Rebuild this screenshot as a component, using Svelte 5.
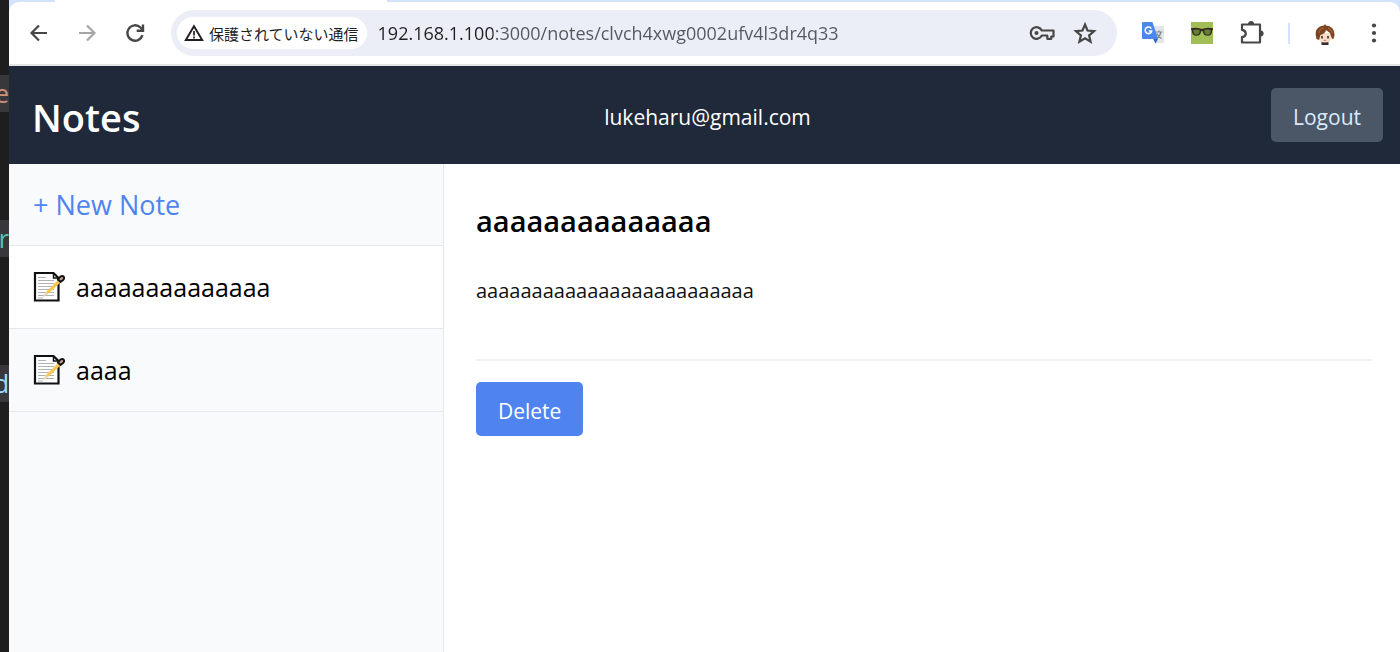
<script>
	const fragments = [
		{ text: 'e', kind: 'string' },
		{ text: 'r', kind: 'type' },
		{ text: 'd', kind: 'variable' }
	];

	const notes = [
		{ id: 'clvch4xwg0002ufv4l3dr4q33', title: 'aaaaaaaaaaaaaa', body: 'aaaaaaaaaaaaaaaaaaaaaaaaa' },
		{ id: 'clvch4xwg0001ufv4l3dr4q32', title: 'aaaa', body: 'aaaa' }
	];

	let activeId = $state(notes[0].id);
	let active = $derived(notes.find((n) => n.id === activeId));
	let url = $derived(`192.168.1.100:3000/notes/${activeId}`);

	function open(event, id) {
		event.preventDefault();
		activeId = id;
	}
</script>

<div class="desktop">
	<div class="editor">
		{#each fragments as f}
			<code class={f.kind}>{f.text}</code>
		{/each}
	</div>

	<div class="browser">
		<div class="tabs"><div class="tab"></div></div>

		<div class="toolbar">
			<button class="icon" aria-label="Back">
				<svg width="24" height="24" viewBox="0 0 24 24" fill="none" stroke="#474747" stroke-width="2.2">
					<path d="M20 12H5M12 4.5 4.5 12l7.5 7.5" />
				</svg>
			</button>
			<button class="icon" aria-label="Forward" disabled>
				<svg width="24" height="24" viewBox="0 0 24 24" fill="none" stroke="#a6a6a6" stroke-width="2.2">
					<path d="M4 12h15M12 4.5 19.5 12 12 19.5" />
				</svg>
			</button>
			<button class="icon" aria-label="Reload">
				<svg width="24" height="24" viewBox="0 0 24 24" fill="none" stroke="#474747" stroke-width="2.4">
					<path d="M19.5 14.2A7.7 7.7 0 1 1 17.5 6.5L19.8 9" />
					<path d="M20 3.5v6.2h-6.3" />
				</svg>
			</button>

			<div class="address">
				<button class="security">
					<svg width="20" height="18" viewBox="0 0 20 18" fill="none" stroke="#1f1f1f" stroke-width="1.9">
						<path d="M10 2.2 18.2 16H1.8z" />
						<path d="M10 7v4.5M10 12.6v2" stroke-width="1.7" />
					</svg>
					<span>保護されていない通信</span>
				</button>
				<input type="text" aria-label="Address" value={url} spellcheck="false" />
				<button class="icon" aria-label="Passwords">
					<svg width="26" height="24" viewBox="0 0 26 24" fill="none" stroke="#474747" stroke-width="2.2">
						<path d="M12.8 9.5h11.7v6h-2.2v2.3h-4v-3.3h-5.5a5.8 5.8 0 1 1 0-5z" stroke-linejoin="round" />
						<circle cx="7.5" cy="12" r="2" fill="#474747" stroke="none" />
					</svg>
				</button>
				<button class="icon" aria-label="Bookmark">
					<svg width="24" height="24" viewBox="0 0 24 24" fill="none" stroke="#474747" stroke-width="2.2">
						<path d="m12 3.5 2.5 6 6.6.6-5 4.3 1.5 6.3-5.600-3.400-5.600 3.400 1.5-6.300-5-4.300 6.600-.6z" />
					</svg>
				</button>
			</div>

			<div class="extensions">
				<button class="icon" aria-label="Translate">
					<svg width="24" height="24" viewBox="0 0 24 24">
						<path d="M9 5h13a1 1 0 0 1 1 1v15a1 1 0 0 1-1 1h-8z" fill="#e3e5e8" />
						<path d="m12 17.500 2.500 5 2.700-5z" fill="#2f5fc4" />
						<path d="M2 1h9.500l5.700 17H2a1 1 0 0 1-1-1V2a1 1 0 0 1 1-1z" fill="#4c87ee" />
						<path d="M10.300 7.600A3.300 3.300 0 1 0 10.700 10H7.800" fill="none" stroke="#fff" stroke-width="1.5" />
						<path d="M14.800 11h6.500M18 9.500V11M20 11q-1 4.500-4 6.500M16 12.500q1.500 3.500 4.500 5" fill="none" stroke="#7d8790" stroke-width="1.2" />
					</svg>
				</button>
				<button class="icon" aria-label="Sunglasses">
					<svg width="24" height="24" viewBox="0 0 24 24">
						<path d="M1 1h22v22H1z" fill="#a1bd55" />
						<path d="M1 7.2q5.500-1.200 9 .2 2 .8 4 0 3.500-1.400 9-.2v1.600l-.8.5q-.2 5.500-4.500 5.500-4.200 0-5-4.600-.7-.7-1.400 0-.8 4.600-5 4.600-4.300 0-4.500-5.500L1 8.800z" fill="#31291e" />
						<path d="M3.200 9q3-1 6.400 0 .5 4.700-3.300 4.700Q3 13.700 3.200 9zM14.400 9q3.400-1 6.400 0 .2 4.700-3.100 4.700-3.800 0-3.300-4.700z" fill="#667d36" />
					</svg>
				</button>
				<button class="icon" aria-label="Extensions">
					<svg width="26" height="26" viewBox="0 0 26 26" fill="none" stroke="#474747" stroke-width="2.2" stroke-linejoin="round">
						<path d="M3 4.500h18v18H3v-5.300q3.800-.6 3.800-3.700T3 9.800z" />
						<path d="M9.500 4a2.600 2.600 0 0 1 5.200 0zM21.500 10.800a2.700 2.700 0 0 1 0 5.400z" fill="#474747" stroke-width="1" />
					</svg>
				</button>
				<span class="divider"></span>
				<button class="icon" aria-label="Profile">
					<svg width="24" height="24" viewBox="0 0 24 24">
						<path d="M8.500 20h7v4h-7z" fill="#3a2d2a" />
						<path d="M5 12h14v5q-1.500 4.500-7 4.500T5 17z" fill="#f8dfca" />
						<path d="M3.500 18Q1 10 5.500 6.500 8 4.500 11 4.500l1-1.500 1 1.500q8 .5 8.500 8.500.2 3-1.500 5.500l-1.800-2.500-1.200-4-4-3q-1 4-5.500 5L6 19z" fill="#7d4523" />
						<path d="M6 12q1-4.500 5-5M15 7q3.500 1.500 4 5" fill="none" stroke="#a36638" stroke-width="1.2" />
						<path d="M9 15v2.500M15 15v2.500" stroke="#3a1d14" stroke-width="1.5" />
						<path d="M10.800 19.300h2.400" stroke="#c0715b" />
					</svg>
				</button>
				<button class="icon" aria-label="Menu">
					<svg width="24" height="24" viewBox="0 0 24 24" fill="#474747">
						<circle cx="12" cy="4.5" r="2.1" />
						<circle cx="12" cy="12" r="2.1" />
						<circle cx="12" cy="19.5" r="2.1" />
					</svg>
				</button>
			</div>
		</div>

		<header>
			<h1><a href="/notes">Notes</a></h1>
			<p>lukeharu@gmail.com</p>
			<button class="logout">Logout</button>
		</header>

		<main>
			<nav>
				<a class="new" href="/notes/new">+ New Note</a>
				{#each notes as note (note.id)}
					<a
						href="/notes/{note.id}"
						class="note"
						class:active={note.id === activeId}
						onclick={(e) => open(e, note.id)}
					>
						<svg width="32" height="32" viewBox="0 0 32 32">
							<path d="M2 2h18.500l5 5v22.500H2z" fill="#fff" stroke="#111" stroke-width="2.2" />
							<path d="M5 6.500h8M5 9.500h16M5 12.500h16M5 15.500h16M5 18.500h16M5 21.500h16M5 24.500h16M5 27h5" stroke="#aeb3b5" />
							<path d="M20.500 2v5h5" fill="none" stroke="#111" stroke-width="1.5" />
							<path d="m10 26 3-5L26 8l2.500 2.500L15 23z" fill="#f9c74f" />
							<path d="m10 26 3-5 2 2z" fill="#e8d9bd" />
							<path d="m25 8.500 2.500-3q2-1.300 3.200.2 1 1.500-.3 3L27.500 11z" fill="#c39b92" stroke="#111" stroke-width="1.9" />
						</svg>
						{note.title}
					</a>
				{/each}
			</nav>

			<article>
				<h2>{active.title}</h2>
				<p>{active.body}</p>
				<hr />
				<button class="delete">Delete</button>
			</article>
		</main>
	</div>
</div>

<style>
	:global(body) {
		margin: 0;
	}

	.desktop {
		display: flex;
		min-height: 100vh;
		background: #1e1e1e;
		font-family: 'Open Sans', 'Noto Sans CJK JP', sans-serif;
		overflow: hidden;
	}

	button,
	input {
		font: inherit;
		border: none;
		padding: 0;
		background: none;
	}

	button {
		cursor: pointer;
	}

	.editor {
		width: 9px;
		flex: none;
		display: flex;
		flex-direction: column;
		align-items: flex-end;
		gap: 108px;
		padding-top: 75px;
		overflow: hidden;
	}

	code {
		display: flex;
		justify-content: flex-end;
		width: 24px;
		font: 25px/37px 'Open Sans', sans-serif;
		background: #38383c;
	}

	.string {
		color: #ce9178;
	}

	.type {
		color: #4ec9b0;
	}

	.variable {
		color: #9cdcfe;
	}

	.browser {
		flex: 1;
		min-width: 0;
		display: flex;
		flex-direction: column;
		background: #d3e3fd;
	}

	.tabs {
		padding-left: 46px;
	}

	.tab {
		width: 332px;
		height: 2px;
		background: #fff;
	}

	.toolbar {
		display: flex;
		align-items: center;
		height: 62px;
		padding: 0 14px 0 18px;
		gap: 24px;
		border-bottom: 2px solid #e4e6e5;
		background: #fff;
		border-radius: 10px 10px 0 0;
	}

	.icon {
		display: flex;
		flex: none;
	}

	.address {
		flex: 1;
		min-width: 0;
		display: flex;
		align-items: center;
		gap: 18px;
		height: 46px;
		box-sizing: border-box;
		padding: 0 20px 0 6px;
		border-radius: 23px;
		background: #ebeef6;
	}

	.security {
		display: flex;
		align-items: center;
		flex: none;
		gap: 5px;
		height: 32px;
		padding: 0 8px 0 7px;
		border-radius: 16px;
		background: #fff;
		color: #1f1f1f;
		font-size: 15px;
		white-space: nowrap;
	}

	input {
		flex: 1;
		min-width: 0;
		height: 32px;
		margin-left: -7px;
		font-size: 18px;
		/* the host is drawn darker than the path */
		color: transparent;
		background: linear-gradient(90deg, #1f1f1f 115px, #54575b 115px);
		background-clip: text;
		outline: none;
	}

	.extensions {
		display: flex;
		align-items: center;
		gap: 25px;
	}

	.divider {
		width: 2px;
		height: 21px;
		margin: 0 -2px;
		background: #d3e3fd;
	}

	header {
		display: grid;
		grid-template-columns: 1fr auto 1fr;
		align-items: center;
		height: 98px;
		padding: 0 17px 0 23px;
		background: #1f2939;
		color: #fff;
	}

	h1,
	header p {
		margin: 0;
		padding-top: 3px;
	}

	h1 {
		font-size: 38px;
		font-weight: 600;
	}

	h1 a {
		color: inherit;
		text-decoration: none;
	}

	header p {
		font-size: 21px;
	}

	.logout,
	.delete {
		height: 54px;
		padding: 3px 22px 0;
		border-radius: 5px;
		font-size: 21px;
	}

	.logout {
		justify-self: end;
		background: #4b5667;
		color: #dbeafe;
	}

	.delete {
		background: #4f84f0;
		color: #fff;
	}

	main {
		flex: 1;
		display: flex;
		background: #fff;
	}

	nav {
		flex: none;
		width: 434px;
		border-right: 1px solid #e5e7eb;
		background: #f9fafc;
	}

	nav a {
		display: flex;
		align-items: center;
		height: 81px;
		padding: 0 24px;
		border-bottom: 1px solid #e5e7eb;
		font-size: 25px;
		color: #000;
		text-decoration: none;
	}

	nav .new {
		font-size: 27px;
		color: #4f84f0;
	}

	nav .note {
		gap: 11px;
		height: 82px;
	}

	nav .active {
		background: #fff;
	}

	article {
		flex: 1;
		min-width: 0;
		padding: 36px 28px 36px 32px;
	}

	h2 {
		margin: 0;
		font-size: 29px;
		font-weight: 600;
		line-height: 42px;
	}

	article p {
		margin: 33px 0 52px;
		font-size: 20px;
		line-height: 32px;
		color: #111;
	}

	hr {
		margin: 0 0 21px;
		border: none;
		border-top: 2px solid #f1f2f4;
	}
</style>
